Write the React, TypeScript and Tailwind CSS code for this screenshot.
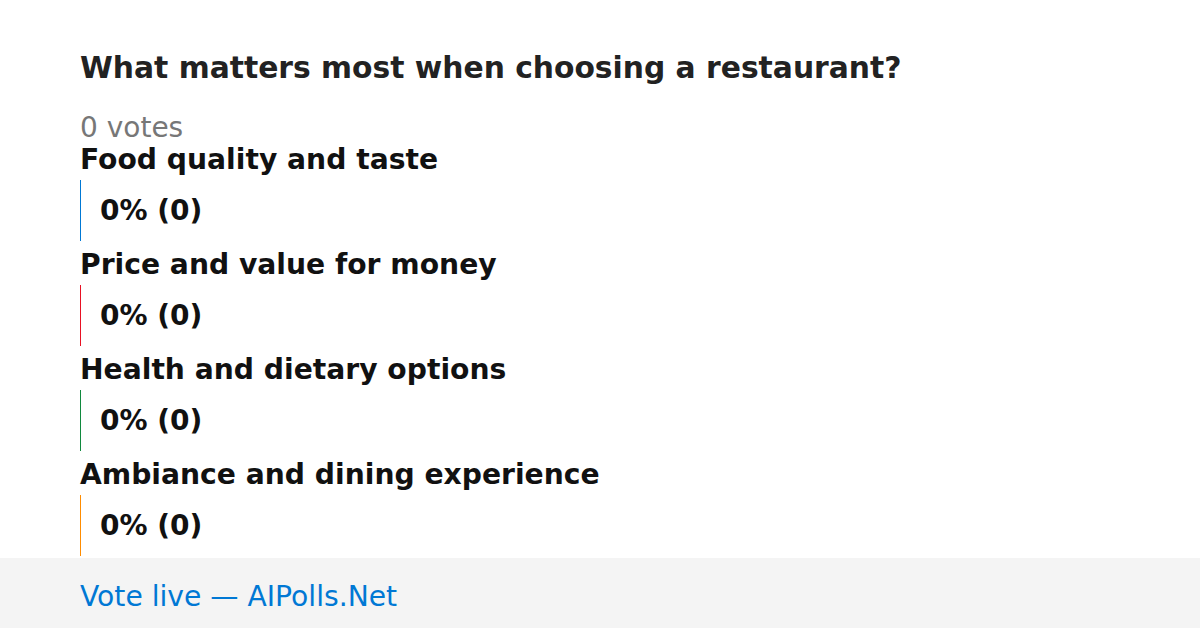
const options = [
  { label: 'Food quality and taste', color: 'border-[#0078d4]' },
  { label: 'Price and value for money', color: 'border-[#e81123]' },
  { label: 'Health and dietary options', color: 'border-[#10893e]' },
  { label: 'Ambiance and dining experience', color: 'border-[#ff8c00]' },
]

export default function App() {
  return (
    <div className="flex h-[628px] w-[1200px] flex-col overflow-hidden bg-white font-['DejaVu_Sans',sans-serif]">
      <div className="flex h-[558px] shrink-0 flex-col overflow-hidden px-20 pt-[50px]">
        <h1 className="text-[29.75px] leading-[36px] font-bold text-[#222]">
          What matters most when choosing a restaurant?
        </h1>
        <div className="mt-[26px] text-[28px] leading-[32px] text-[#777]">0 votes</div>
        <div className="flex flex-col">
          {options.map((o) => (
            <div key={o.label} className="flex flex-col">
              <div className="text-[28.2px] leading-[32px] font-bold text-[#111]">{o.label}</div>
              <div
                className={`mt-[4px] mb-[8px] flex h-[61px] items-center border-l pl-[19px] text-[28px] font-bold text-[#111] ${o.color}`}
              >
                0% (0)
              </div>
            </div>
          ))}
        </div>
      </div>
      <div className="flex h-[70px] shrink-0 items-center bg-[#f4f4f4] px-20 pt-2 text-[28.2px] text-[#0078d4]">
        Vote live — AIPolls.Net
      </div>
    </div>
  )
}
